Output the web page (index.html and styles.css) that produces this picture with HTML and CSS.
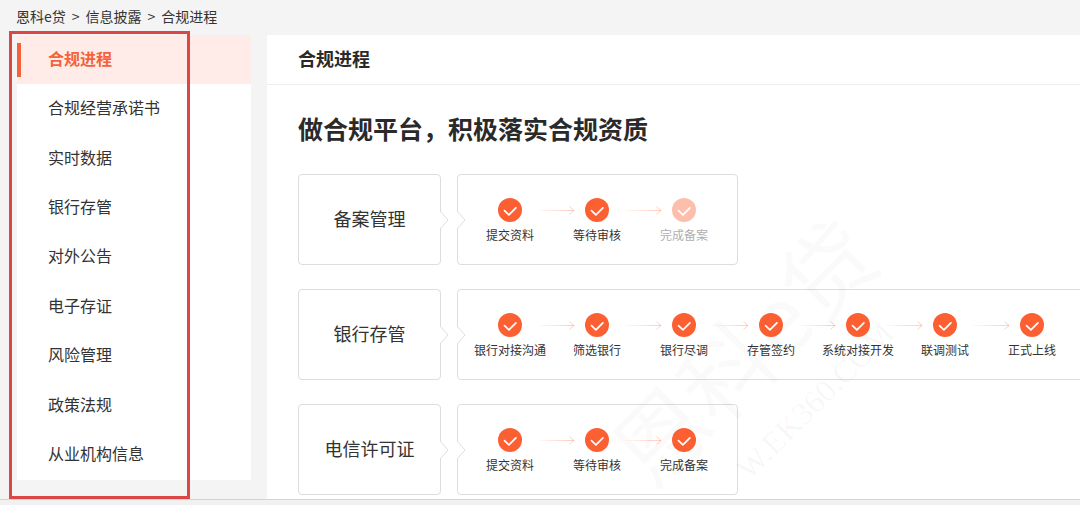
FILE: index.html
```
<!DOCTYPE html>
<html lang="zh-CN">
<head>
    <meta charset="UTF-8">
    <meta name="viewport" content="width=device-width, initial-scale=1.0">
    <title>合规进程 - 恩科e贷</title>
    <link rel="stylesheet" href="styles.css">
</head>
<body>
    <svg class="sprite" aria-hidden="true">
        <defs>
            <linearGradient id="arrow-fade" gradientUnits="userSpaceOnUse" x1="6" y1="0" x2="43" y2="0">
                <stop offset="0" stop-color="#ff8a68" stop-opacity="0.05"/>
                <stop offset="1" stop-color="#ff8a68" stop-opacity="0.45"/>
            </linearGradient>
            <symbol id="check" viewBox="0 0 24 24">
                <circle cx="12" cy="12" r="12" fill="#fc6032"/>
                <path d="M6.5 12.6l4.4 4.2 7-7" fill="none" stroke="#fff" stroke-width="1.7" stroke-linecap="round" stroke-linejoin="round"/>
            </symbol>
            <symbol id="arrow" viewBox="0 0 43 24">
                <path d="M6 12.5H42M37.5 8.5l4.5 4-4.5 4" fill="none" stroke="url(#arrow-fade)"/>
            </symbol>
            <symbol id="notch" viewBox="0 0 9 18">
                <path d="M0 0L8 9 0 18" fill="#fff" stroke="#ddd"/>
            </symbol>
        </defs>
    </svg>

    <nav class="breadcrumb" aria-label="面包屑">
        <a href="#">恩科e贷</a>
        <span>&gt;</span>
        <a href="#">信息披露</a>
        <span>&gt;</span>
        <a href="#">合规进程</a>
    </nav>

    <div class="layout">
        <aside class="sidebar">
            <nav class="menu">
                <a class="active" href="#"><span>合规进程</span></a>
                <a href="#"><span>合规经营承诺书</span></a>
                <a href="#"><span>实时数据</span></a>
                <a href="#"><span>银行存管</span></a>
                <a href="#"><span>对外公告</span></a>
                <a href="#"><span>电子存证</span></a>
                <a href="#"><span>风险管理</span></a>
                <a href="#"><span>政策法规</span></a>
                <a href="#"><span>从业机构信息</span></a>
            </nav>
            <div class="highlight"></div>
        </aside>

        <main class="panel">
            <h1>合规进程</h1>
            <div class="content">
                <h2>做合规平台，积极落实合规资质</h2>

                <section class="process">
                    <h3 class="card name">备案管理<svg class="notch"><use href="#notch"/></svg></h3>
                    <div class="card steps">
                        <svg class="notch"><use href="#notch"/></svg>
                        <div class="step"><svg class="check"><use href="#check"/></svg><span>提交资料</span></div>
                        <svg class="arrow"><use href="#arrow"/></svg>
                        <div class="step"><svg class="check"><use href="#check"/></svg><span>等待审核</span></div>
                        <svg class="arrow"><use href="#arrow"/></svg>
                        <div class="step pending"><svg class="check"><use href="#check"/></svg><span>完成备案</span></div>
                    </div>
                </section>

                <section class="process">
                    <h3 class="card name">银行存管<svg class="notch"><use href="#notch"/></svg></h3>
                    <div class="card steps">
                        <svg class="notch"><use href="#notch"/></svg>
                        <div class="step"><svg class="check"><use href="#check"/></svg><span>银行对接沟通</span></div>
                        <svg class="arrow"><use href="#arrow"/></svg>
                        <div class="step"><svg class="check"><use href="#check"/></svg><span>筛选银行</span></div>
                        <svg class="arrow"><use href="#arrow"/></svg>
                        <div class="step"><svg class="check"><use href="#check"/></svg><span>银行尽调</span></div>
                        <svg class="arrow"><use href="#arrow"/></svg>
                        <div class="step"><svg class="check"><use href="#check"/></svg><span>存管签约</span></div>
                        <svg class="arrow"><use href="#arrow"/></svg>
                        <div class="step"><svg class="check"><use href="#check"/></svg><span>系统对接开发</span></div>
                        <svg class="arrow"><use href="#arrow"/></svg>
                        <div class="step"><svg class="check"><use href="#check"/></svg><span>联调测试</span></div>
                        <svg class="arrow"><use href="#arrow"/></svg>
                        <div class="step"><svg class="check"><use href="#check"/></svg><span>正式上线</span></div>
                    </div>
                </section>

                <section class="process">
                    <h3 class="card name">电信许可证<svg class="notch"><use href="#notch"/></svg></h3>
                    <div class="card steps">
                        <svg class="notch"><use href="#notch"/></svg>
                        <div class="step"><svg class="check"><use href="#check"/></svg><span>提交资料</span></div>
                        <svg class="arrow"><use href="#arrow"/></svg>
                        <div class="step"><svg class="check"><use href="#check"/></svg><span>等待审核</span></div>
                        <svg class="arrow"><use href="#arrow"/></svg>
                        <div class="step"><svg class="check"><use href="#check"/></svg><span>完成备案</span></div>
                    </div>
                </section>
            </div>
            <div class="watermark" aria-hidden="true">
                <div class="watermark-name">恩科e贷</div>
                <div class="watermark-url">W.EK360.COM</div>
            </div>
        </main>
    </div>
    <footer class="bottom-bar"></footer>
</body>
</html>
```

FILE: styles.css
```
:root {
    --page-bg: #f4f4f4;
    --text-color: #333;
    --primary: #f4623a;
    --active-bg: #ffece8;
    --card-border: #ddd;
    --highlight: #dc4644;
}

* {
    box-sizing: border-box;
}

body {
    margin: 0;
    font-family: "Noto Sans CJK SC", sans-serif;
    color: var(--text-color);
    background-color: var(--page-bg);
}

a {
    color: inherit;
    text-decoration: none;
}

h1, h2, h3 {
    margin: 0;
}

.sprite {
    position: absolute;
    width: 0;
    height: 0;
}

.breadcrumb {
    display: flex;
    gap: 6px;
    padding: 0 16px 2px;
    font-size: 14px;
    line-height: 33px;
}

.layout {
    display: flex;
    gap: 16px;
    padding-left: 17px;
}

/* Sidebar */
.sidebar {
    position: relative;
    flex: 0 0 234px;
}

.menu {
    display: grid;
    grid-auto-rows: 1fr;
    min-height: 445px;
    background-color: #fff;
}

.menu a {
    display: flex;
    align-items: center;
    padding-left: 31px;
    font-size: 16px;
}

.menu span {
    padding-bottom: 4px;
}

.menu .active {
    padding-left: 0;
    gap: 27px;
    font-weight: bold;
    color: var(--primary);
    background-color: var(--active-bg);
}

.menu .active::before {
    content: "";
    width: 4px;
    height: 34px;
    background-color: var(--primary);
}

.highlight {
    position: absolute;
    top: -4px;
    bottom: 0;
    left: -8px;
    width: 181px;
    border: 3px solid var(--highlight);
    pointer-events: none;
}

/* Main panel */
.panel {
    position: relative;
    flex: 1;
    min-width: 0;
    overflow: hidden;
    background-color: #fff;
}

.panel h1 {
    padding: 0 0 2px 31px;
    border-bottom: 1px solid #eee;
    font-size: 18px;
    line-height: 47px;
    color: #2a2a2a;
}

.content {
    display: flex;
    flex-direction: column;
    gap: 24px;
    padding: 25px 31px 4px;
}

.content h2 {
    margin-bottom: 4px;
    font-size: 25px;
    line-height: 36px;
    color: #2a2a2a;
}

.process {
    display: flex;
    gap: 16px;
}

.card {
    position: relative;
    border: 1px solid var(--card-border);
    border-radius: 4px;
}

.name {
    display: flex;
    flex: 0 0 143px;
    align-items: center;
    justify-content: center;
    padding-bottom: 3px;
    font-size: 18px;
    font-weight: normal;
}

.steps {
    display: flex;
    flex: none;
    padding: 23px 31px 20px 30px;
}

.notch {
    position: absolute;
    top: calc(50% - 9px);
    width: 9px;
    height: 18px;
}

.name .notch {
    right: -9px;
}

.steps .notch {
    left: -1px;
}

.step {
    display: flex;
    flex-direction: column;
    align-items: center;
    gap: 4px;
    width: 44px;
    font-size: 12px;
    line-height: 18px;
    white-space: nowrap;
}

.pending {
    opacity: 0.4;
}

.check {
    width: 24px;
    height: 24px;
}

.arrow {
    width: 43px;
    height: 24px;
}

.watermark {
    position: absolute;
    top: 260px;
    left: 332px;
    color: rgba(0, 0, 0, 0.02);
    text-align: center;
    white-space: nowrap;
    transform: rotate(-45deg);
    pointer-events: none;
}

.watermark-name {
    font-size: 92px;
    line-height: 92px;
}

.watermark-url {
    margin-top: 24px;
    padding-left: 32px;
    font-family: "Liberation Serif", serif;
    font-size: 32px;
    line-height: 36px;
    color: rgba(0, 0, 0, 0.04);
}

.bottom-bar {
    height: 6px;
    border-top: 1px solid #d4d4d4;
    background-color: #f1f1f1;
}
```
